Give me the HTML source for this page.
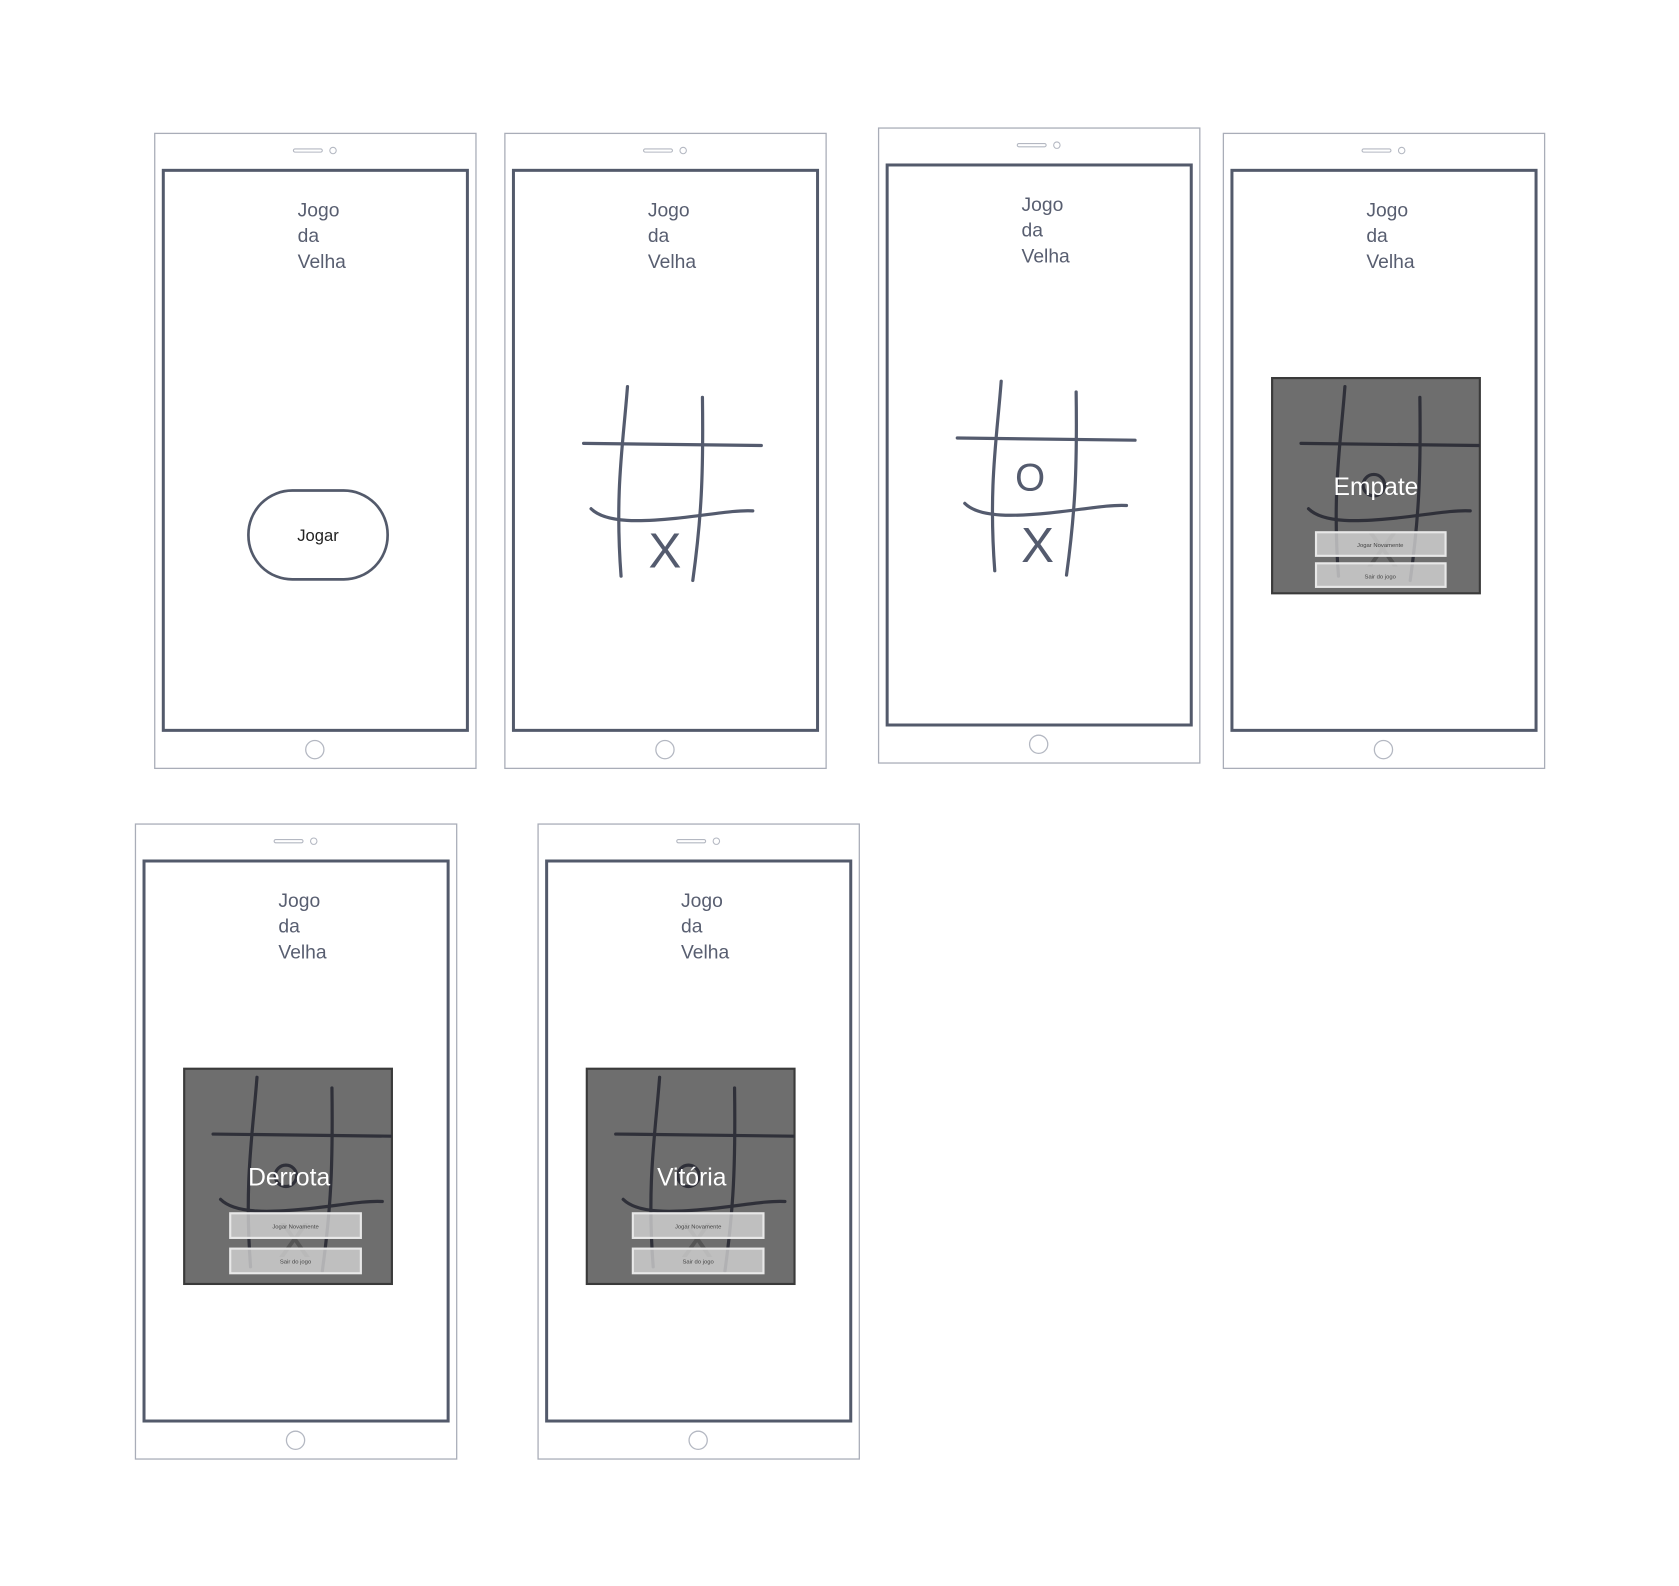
<!DOCTYPE html>
<html><head><meta charset="utf-8"><style>
html,body{margin:0;padding:0;background:#fff;}
svg{display:block;}
text{font-family:"Liberation Sans",sans-serif;}
</style></head><body>
<svg width="1679" height="1586" viewBox="0 0 1568 1481" xmlns="http://www.w3.org/2000/svg">
<defs>
  <g id="frame">
    <rect x="0.5" y="0.5" width="300" height="593" fill="#fff" stroke="#a9adb8" stroke-width="1.2"/>
    <rect x="8.5" y="35" width="284" height="523" fill="#fff" stroke="#535a6b" stroke-width="2.8"/>
    <rect x="130" y="15" width="27" height="3" rx="1.5" fill="none" stroke="#b4b8c2" stroke-width="1"/>
    <circle cx="167" cy="16.5" r="3" fill="none" stroke="#b4b8c2" stroke-width="1"/>
    <circle cx="150" cy="576" r="8.5" fill="none" stroke="#b4b8c2" stroke-width="1.2"/>
    <g fill="#585e70" font-size="18">
      <text x="134" y="78">Jogo</text>
      <text x="134" y="102">da</text>
      <text x="134" y="126">Velha</text>
    </g>
  </g>
  <g id="grid" fill="none" stroke-width="3" stroke-linecap="round">
    <path d="M115,237 C111,290 103,335 109,414"/>
    <path d="M185,247 C186,320 184,360 176,418"/>
    <path d="M74,290 L240,292"/>
    <path d="M81,351 C95,365 130,363 160,360 S215,352 232,353"/>
  </g>
  <clipPath id="ov"><rect x="46" y="229" width="194" height="201"/></clipPath>
  <g id="overlay">
    <rect x="46" y="229" width="194" height="201" fill="#6e6e6e" stroke="#3a3a3a" stroke-width="2"/>
    <g clip-path="url(#ov)">
      <use href="#grid" stroke="#2f3039" transform="translate(-1,0)"/>
      <circle cx="141" cy="329" r="10" fill="none" stroke="#2f3039" stroke-width="3"/>
      <text x="149" y="405" font-size="46" fill="#555" text-anchor="middle">X</text>
    </g>
  </g>
</defs>

<!-- Phone 1 -->
<g transform="translate(144,124)">
  <use href="#frame"/>
  <rect x="88" y="334" width="130" height="83" rx="41" fill="none" stroke="#535a6b" stroke-width="2.5"/>
  <text x="153" y="381" font-size="15.5" fill="#222" text-anchor="middle">Jogar</text>
</g>

<!-- Phone 2 -->
<g transform="translate(471,124)">
  <use href="#frame"/>
  <use href="#grid" stroke="#545b6e"/>
  <text x="150" y="406" font-size="46" fill="#545b6e" text-anchor="middle">X</text>
</g>

<!-- Phone 3 -->
<g transform="translate(820,119)">
  <use href="#frame"/>
  <use href="#grid" stroke="#545b6e"/>
  <text x="142" y="339" font-size="36" fill="#545b6e" text-anchor="middle">O</text>
  <text x="149" y="406" font-size="46" fill="#545b6e" text-anchor="middle">X</text>
</g>

<!-- Phone 4 -->
<g transform="translate(1142,124)">
  <use href="#frame"/>
  <use href="#overlay"/>
  <text x="143" y="338" font-size="23" fill="#fff" text-anchor="middle">Empate</text>
  <rect x="87" y="373" width="121" height="22" fill="#d6d6d6" fill-opacity="0.78" stroke="#e8e8e8" stroke-width="2"/>
  <rect x="87" y="402" width="121" height="22" fill="#d6d6d6" fill-opacity="0.78" stroke="#e8e8e8" stroke-width="2"/>
  <text x="147" y="387" font-size="5.5" fill="#444" text-anchor="middle">Jogar Novamente</text>
  <text x="147" y="416" font-size="5.5" fill="#444" text-anchor="middle">Sair do jogo</text>
</g>

<!-- Phone 5 -->
<g transform="translate(126,769)">
  <use href="#frame"/>
  <use href="#overlay"/>
  <text x="144" y="338" font-size="23" fill="#fff" text-anchor="middle">Derrota</text>
  <rect x="89" y="364" width="122" height="23" fill="#d6d6d6" fill-opacity="0.78" stroke="#e8e8e8" stroke-width="2"/>
  <rect x="89" y="397" width="122" height="23" fill="#d6d6d6" fill-opacity="0.78" stroke="#e8e8e8" stroke-width="2"/>
  <text x="150" y="378" font-size="5.5" fill="#444" text-anchor="middle">Jogar Novamente</text>
  <text x="150" y="411" font-size="5.5" fill="#444" text-anchor="middle">Sair do jogo</text>
</g>

<!-- Phone 6 -->
<g transform="translate(502,769)">
  <use href="#frame"/>
  <use href="#overlay"/>
  <text x="144" y="338" font-size="23" fill="#fff" text-anchor="middle">Vitória</text>
  <rect x="89" y="364" width="122" height="23" fill="#d6d6d6" fill-opacity="0.78" stroke="#e8e8e8" stroke-width="2"/>
  <rect x="89" y="397" width="122" height="23" fill="#d6d6d6" fill-opacity="0.78" stroke="#e8e8e8" stroke-width="2"/>
  <text x="150" y="378" font-size="5.5" fill="#444" text-anchor="middle">Jogar Novamente</text>
  <text x="150" y="411" font-size="5.5" fill="#444" text-anchor="middle">Sair do jogo</text>
</g>
</svg>
</body></html>
